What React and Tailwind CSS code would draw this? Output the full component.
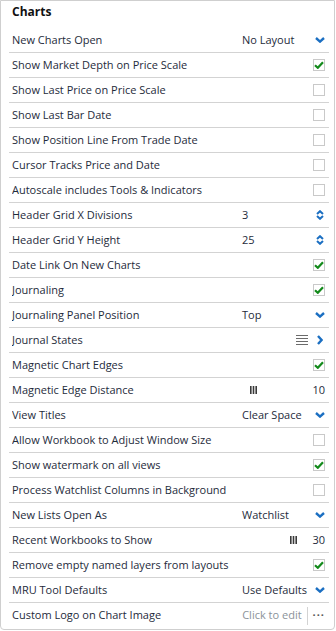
import React from 'react'

const Check = ({ on }) => (
  <span className="w-[12px] h-[12px] border border-[#c9c9c9] bg-white flex items-center justify-center">
    {on && (
      <svg width="10" height="8" viewBox="0 0 10 8">
        <path d="M1 4.2 L3.8 6.8 L9 1.2" fill="none" stroke="#138a1b" strokeWidth="2.2" />
      </svg>
    )}
  </span>
)

const ChevronDown = () => (
  <svg width="10" height="6" viewBox="0 0 10 6">
    <path d="M1 1 L5 4.6 L9 1" fill="none" stroke="#1b6fc2" strokeWidth="2.4" />
  </svg>
)

const ChevronRight = () => (
  <svg width="6" height="10" viewBox="0 0 6 10">
    <path d="M1 1 L4.6 5 L1 9" fill="none" stroke="#1b6fc2" strokeWidth="2.4" />
  </svg>
)

const Spinner = () => (
  <svg width="8" height="10" viewBox="0 0 8 10">
    <path d="M1 4 L4 1.2 L7 4" fill="none" stroke="#1b6fc2" strokeWidth="2" />
    <path d="M1 6 L4 8.8 L7 6" fill="none" stroke="#1b6fc2" strokeWidth="2" />
  </svg>
)

const Grip = () => (
  <svg width="7" height="8" viewBox="0 0 7 8">
    <rect x="0" y="0" width="1.6" height="8" fill="#3a3a3a" />
    <rect x="2.7" y="0" width="1.6" height="8" fill="#3a3a3a" />
    <rect x="5.4" y="0" width="1.6" height="8" fill="#3a3a3a" />
  </svg>
)

const Menu = () => (
  <svg width="12" height="10" viewBox="0 0 12 10">
    <rect x="0" y="0" width="12" height="1" fill="#6b6b6b" />
    <rect x="0" y="3" width="12" height="1" fill="#6b6b6b" />
    <rect x="0" y="6" width="12" height="1" fill="#6b6b6b" />
    <rect x="0" y="9" width="12" height="1" fill="#6b6b6b" />
  </svg>
)

const Row = ({ label, last, children }) => (
  <div className={`h-[25px] flex items-center pl-[3px] pr-[4px] ${last ? '' : 'border-b border-[#d3d3d3]'}`}>
    <span className="flex-1 truncate">{label}</span>
    {children}
  </div>
)

const Select = ({ value }) => (
  <div className="w-[83px] flex items-center">
    <span className="flex-1">{value}</span>
    <span className="w-[10px] flex justify-center"><ChevronDown /></span>
  </div>
)

const Stepper = ({ value }) => (
  <div className="w-[83px] flex items-center">
    <span className="flex-1">{value}</span>
    <span className="w-[10px] flex justify-center"><Spinner /></span>
  </div>
)

const Slider = ({ value, gap }) => (
  <div className="flex items-center">
    <Grip />
    <span className={`${gap} text-right`}>{value}</span>
  </div>
)

export default function App() {
  return (
    <div className="w-[336px] h-[631px] bg-white font-['Open_Sans',sans-serif] text-[11px] text-[#1e2b3b]">
      <div className="w-[335px] h-[630px] border border-[#cfcfcf] rounded-b-[4px] pl-[8px] pr-[5px]">
        <div className="h-[27px] pl-[3px] pt-[2px] font-bold text-[12px] text-[#111]">Charts</div>

        <Row label="New Charts Open"><Select value="No Layout" /></Row>
        <Row label="Show Market Depth on Price Scale"><Check on /></Row>
        <Row label="Show Last Price on Price Scale"><Check /></Row>
        <Row label="Show Last Bar Date"><Check /></Row>
        <Row label="Show Position Line From Trade Date"><Check /></Row>
        <Row label="Cursor Tracks Price and Date"><Check /></Row>
        <Row label="Autoscale includes Tools & Indicators"><Check /></Row>
        <Row label="Header Grid X Divisions"><Stepper value="3" /></Row>
        <Row label="Header Grid Y Height"><Stepper value="25" /></Row>
        <Row label="Date Link On New Charts"><Check on /></Row>
        <Row label="Journaling"><Check on /></Row>
        <Row label="Journaling Panel Position"><Select value="Top" /></Row>
        <Row label="Journal States">
          <div className="flex items-center gap-[9px] pr-[2px]">
            <Menu />
            <ChevronRight />
          </div>
        </Row>
        <Row label="Magnetic Chart Edges"><Check on /></Row>
        <Row label="Magnetic Edge Distance"><Slider value="10" gap="w-[68px]" /></Row>
        <Row label="View Titles"><Select value="Clear Space" /></Row>
        <Row label="Allow Workbook to Adjust Window Size"><Check /></Row>
        <Row label="Show watermark on all views"><Check on /></Row>
        <Row label="Process Watchlist Columns in Background"><Check /></Row>
        <Row label="New Lists Open As"><Select value="Watchlist" /></Row>
        <Row label="Recent Workbooks to Show"><Slider value="30" gap="w-[28px]" /></Row>
        <Row label="Remove empty named layers from layouts"><Check on /></Row>
        <Row label="MRU Tool Defaults"><Select value="Use Defaults" /></Row>
        <Row label="Custom Logo on Chart Image" last>
          <div className="flex items-center h-full">
            <span className="text-[#8b929a]">Click to edit</span>
            <span className="w-px h-[18px] bg-[#d3d3d3] ml-[5px] mr-[5px]" />
            <span className="text-[#555] tracking-[1px] font-bold leading-none pb-[3px]">···</span>
          </div>
        </Row>
      </div>
    </div>
  )
}
